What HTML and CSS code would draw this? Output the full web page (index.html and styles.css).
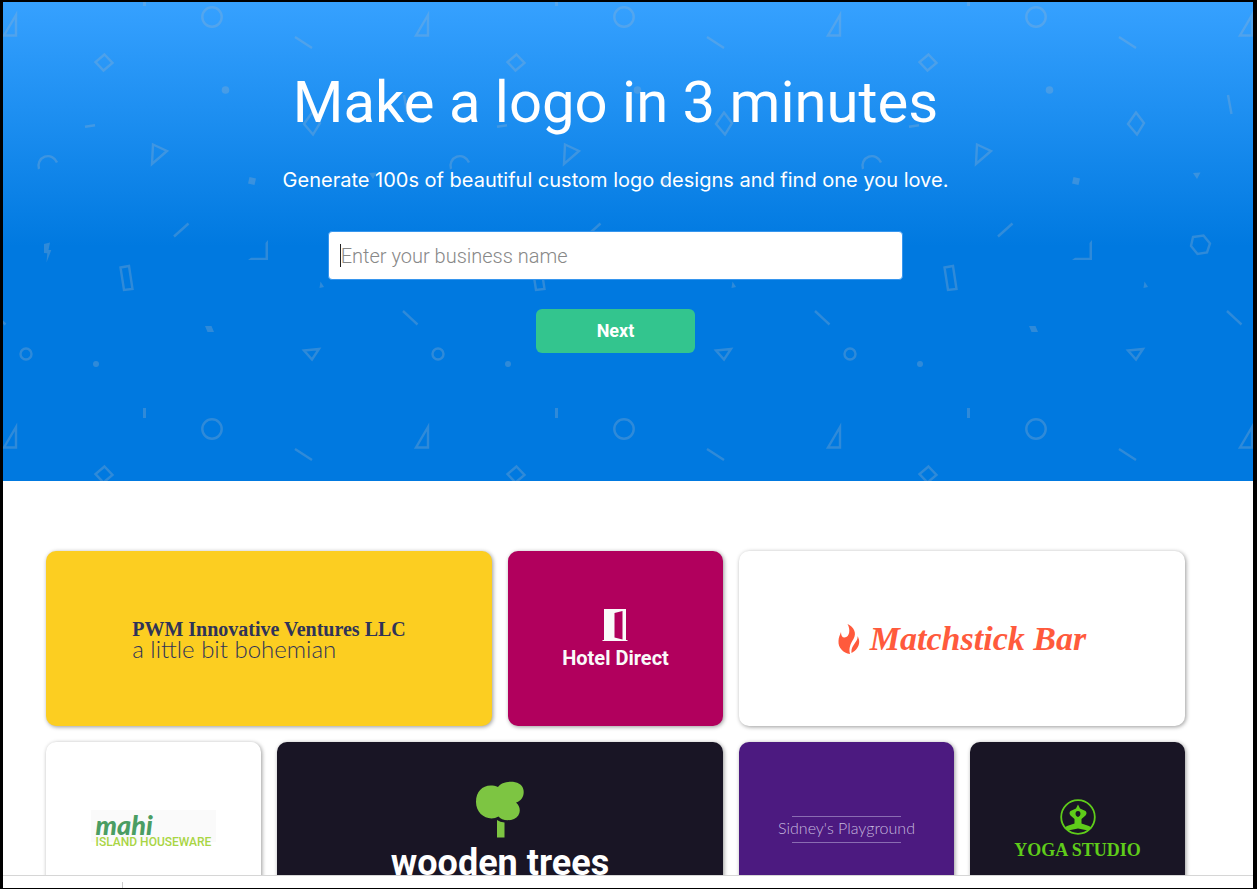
FILE: index.html
```html
<!DOCTYPE html>
<html lang="en">
  <head>
    <meta charset="UTF-8" />
    <meta name="viewport" content="width=device-width, initial-scale=1.0" />
    <title>Logo Maker</title>
    <link rel="stylesheet" href="styles.css">
  </head>
  <body>
    <main class="page">
      <section class="hero">
        <svg class="hero-pattern" aria-hidden="true">
          <defs>
            <pattern id="shapes" x="-3" y="-2" width="412" height="412" patternUnits="userSpaceOnUse">
              <g fill="none" stroke="#a8b8c8" stroke-width="2.400">
                <path d="M16 15 L4 35.500 H16 Z" />
                <path d="M144.500 -4 V6 M144.500 408 V418" stroke-width="3" />
                <circle cx="212" cy="17" r="9.700" />
                <path d="M295 37 L312 48" />
                <path d="M104.500 54.500 L112.500 63 L103.500 70.500 L95.500 62 Z" />
                <path d="M85 126.700 L95 125.300" />
                <path d="M404 95 L407.500 114" />
                <path d="M312 112.500 L320 123 L313 134.500 L304 124 Z" />
                <path d="M153 144.500 L167 151 L152 164 Z" />
                <path d="M39 169 A9.500 9.500 0 1 1 57 162.500" />
                <path d="M174 236.500 L188.500 223.500" />
                <path d="M120.500 267.500 L129 266 L132.500 289 L124 290 Z" />
                <path d="M369 237 L379.500 235.500 L386 243.500 L383 252.500 L373.500 254 L367 246 Z" />
                <path d="M403 311 L417.500 324.500 M-9 311 L5.500 324.500" />
                <circle cx="26" cy="354" r="5.500" />
                <path d="M304 350.500 L319 349 L312 359.500 Z" />
              </g>
              <g fill="#a8b8c8">
                <circle cx="225.500" cy="90" r="3.800" />
                <path d="M249.500 177 L256 178.500 L254.500 185 L248 183.500 Z" />
                <path d="M369 173 L376.500 172.500 L373 179 Z" />
                <path d="M44 244 L50 242.500 L48.500 250 L51.300 250 L46.500 262.500 L47.300 253.300 L44 253 Z" />
                <path d="M268 240 V260 H248 L251 257.800 H265.500 V243 Z" />
                <path d="M320.500 281.500 L324 287 L319.500 288 Z" />
                <path d="M205 326 H211.500 L214 332 H207.500 Z" />
                <circle cx="96" cy="364" r="3" />
              </g>
            </pattern>
          </defs>
          <rect width="100%" height="100%" fill="url(#shapes)" />
        </svg>
        <h1>Make a logo in 3 minutes</h1>
        <p class="subtitle">Generate 100s of beautiful custom logo designs and find one you love.</p>
        <form class="name-form">
          <div class="field">
            <input type="text" id="business" name="business" aria-label="Business name" placeholder="Enter your business name" />
            <span class="caret"></span>
          </div>
          <button type="button">Next</button>
        </form>
      </section>

      <section class="gallery">
        <div class="card wide yellow">
          <div class="logo pwm">
            <strong>PWM Innovative Ventures LLC</strong>
            <span>a little bit bohemian</span>
          </div>
        </div>
        <div class="card magenta">
          <div class="logo hotel">
            <svg width="26" height="34" viewBox="0 0 26 34">
              <path fill="#fafafa" fill-rule="evenodd" d="M2 1 H24 V32 H25.500 V33 H0.500 V32 H2 Z M12.500 5 V29.500 L20.500 31.500 V3 Z" />
            </svg>
            <strong>Hotel Direct</strong>
          </div>
        </div>
        <div class="card wide">
          <div class="logo matchstick">
            <svg width="22" height="30" viewBox="0 0 22 30">
              <path fill="#ff5a3c" d="M9.500 0 C16 3 19 9 15.500 15 C12.500 20 10.500 24 12 30 C5 29 0 23.500 0.500 17 C0.500 13.500 2 11 3 8 C3 11.500 4 13.500 6.500 13.500 C12 13 12.500 5 9.500 0 Z" />
              <path fill="#ff5a3c" d="M19.500 12 C20.500 18 12.500 21 13.500 29 C20 26 23.500 18.500 19.500 12 Z" />
            </svg>
            <strong>Matchstick Bar</strong>
          </div>
        </div>
        <div class="card">
          <div class="logo mahi">
            <strong>mahi</strong>
            <span>ISLAND HOUSEWARE</span>
          </div>
        </div>
        <div class="card wide dark">
          <div class="logo trees">
            <svg width="50" height="58" viewBox="0 0 50 58">
              <path fill="#7dc542" d="M23 6 C27 -1 47 -2 48.500 9 C49.500 15 46.500 20 41 21.500 C47 27 45.500 35 39 38 C33 40.500 26 39 23.500 35.500 C14 41 1 34 1 21 C1 8 11 1.500 23 6 Z" />
              <path fill="#7dc542" d="M22 39 Q25 41 29.500 41.500 V56.500 H22 Z" />
            </svg>
            <strong>wooden trees</strong>
          </div>
        </div>
        <div class="card purple">
          <div class="logo sidney">
            <span>Sidney's Playground</span>
          </div>
        </div>
        <div class="card dark">
          <div class="logo yoga">
            <svg width="36" height="36" viewBox="0 0 36 36">
              <circle cx="18" cy="18" r="16.800" fill="none" stroke="#5fcc1a" stroke-width="1.800" />
              <path fill="#5fcc1a" fill-rule="evenodd" d="M18 5.500 L20 9.500 L25.500 12 Q27.500 14 25.500 16.500 L21.500 20 V24.500 L29 27 L32 29 L28 31.500 L18 29.500 L8 31.500 L4 29 L7 27 L14.500 24.500 V20 L10.500 16.500 Q8.500 14 10.500 12 L16 9.500 Z M18 12 C14.500 12 15 17.500 18 18 C21 17.500 21.500 12 18 12 Z" />
            </svg>
            <strong>YOGA STUDIO</strong>
          </div>
        </div>
      </section>
    </main>
    <footer class="bottom-bar"></footer>
  </body>
</html>
```
FILE: styles.css
```css
* {
  box-sizing: border-box;
}

body {
  margin: 0;
  height: 100vh;
  display: flex;
  flex-direction: column;
  font-family: Roboto, "Liberation Sans", sans-serif;
  background-color: #fff;
  border: solid #000;
  border-width: 2px 4px 1px 3px;
}

.page {
  flex: 1;
  min-height: 0;
  overflow: hidden;
}

.hero {
  position: relative;
  display: flex;
  flex-direction: column;
  align-items: center;
  padding: 64px 25px 128px 0;
  background: linear-gradient(#36a1ff, #0079e0 51%);
  color: #fff;
}

.hero-pattern {
  position: absolute;
  top: 0;
  left: 0;
  width: 100%;
  height: 100%;
  opacity: 0.28;
}

h1,
.subtitle,
.name-form {
  position: relative;
}

h1 {
  margin: 0;
  font-size: 58px;
  font-weight: 400;
  line-height: 72px;
}

.subtitle {
  margin: 28px 0 36px;
  font-family: Inter, sans-serif;
  font-size: 20px;
  line-height: 29px;
}

.name-form {
  display: flex;
  flex-direction: column;
  align-items: center;
  width: 100%;
}

.field {
  position: relative;
  width: 47%;
}

.caret {
  position: absolute;
  left: 12px;
  top: 13px;
  width: 1px;
  height: 23px;
  background-color: #222;
}

input[type="text"] {
  display: block;
  width: 100%;
  height: 49px;
  padding: 0 12px;
  border: 1px solid #3796ee;
  border-radius: 4px;
  background-color: #fff;
  font-family: inherit;
  font-size: 20px;
  outline: none;
}

input::placeholder {
  color: #888;
  font-weight: 300;
}

button {
  width: 159px;
  height: 44px;
  margin-top: 29px;
  padding: 0 0 2px;
  border: none;
  border-radius: 6px;
  background-color: #33c58e;
  color: #fff;
  font-family: inherit;
  font-size: 18px;
  font-weight: 700;
  cursor: pointer;
}

.gallery {
  display: grid;
  grid-template-columns: repeat(5, 1fr);
  grid-auto-rows: 175px;
  gap: 16px;
  padding: 70px 68px 16px 43px;
}

.card {
  display: flex;
  justify-content: center;
  align-items: center;
  min-width: 0;
  border-radius: 10px;
  background-color: #fff;
  box-shadow: 1px 1px 4px rgba(0, 0, 0, 0.4);
}

.wide {
  grid-column: span 2;
}

.yellow {
  background-color: #fcce21;
}

.magenta {
  background-color: #b1005d;
}

.dark {
  background-color: #191525;
}

.purple {
  background-color: #4c1a80;
}

.logo {
  display: flex;
  flex-direction: column;
  align-items: center;
  white-space: nowrap;
}

.pwm {
  align-items: flex-start;
  color: #2f3358;
}

.pwm strong {
  font-family: "Liberation Serif", serif;
  font-size: 20px;
  line-height: 20px;
}

.pwm span {
  font-family: Lato, sans-serif;
  font-size: 24px;
  font-weight: 300;
  line-height: 20px;
}

.hotel strong {
  margin-top: 4px;
  color: #fafafa;
  font-size: 20px;
  line-height: 24px;
}

.matchstick {
  flex-direction: row;
  gap: 10px;
  color: #ff5a3c;
}

.matchstick strong {
  font-family: "Liberation Serif", serif;
  font-size: 34px;
  font-style: italic;
  line-height: 40px;
}

.mahi {
  align-items: flex-start;
  padding: 6px 5px 0;
  background: linear-gradient(#fafafa, #fafafa) no-repeat 0 0 / 100% 32px;
}

.mahi strong {
  color: #4a9d63;
  font-family: Lato, sans-serif;
  font-size: 27px;
  font-weight: 900;
  font-style: italic;
  line-height: 18px;
}

.mahi span {
  color: #a9d544;
  font-family: Roboto, sans-serif;
  font-size: 12px;
  font-weight: 500;
  line-height: 16px;
}

.trees strong {
  margin-top: 8px;
  color: #fff;
  font-size: 36px;
  font-weight: 700;
  line-height: 32px;
}

.sidney {
  padding: 4px 0;
  color: #c5b8de;
}

.sidney::before,
.sidney::after {
  content: "";
  width: 80%;
  height: 1px;
  background-color: #8a6cb2;
}

.sidney span {
  padding-bottom: 4px;
  font-family: Lato, sans-serif;
  font-size: 16px;
  font-weight: 300;
  line-height: 21px;
}

.yoga strong {
  margin-top: 4px;
  color: #5fcc1a;
  font-family: "Liberation Serif", serif;
  font-size: 18px;
  line-height: 22px;
}

.bottom-bar {
  display: flex;
  height: 13px;
  border-top: 1px solid #d6d6d6;
  background-color: #fff;
}

.bottom-bar::before {
  content: "";
  width: 119px;
  margin-top: 6px;
  border-right: 1px solid #ccc;
}
```
